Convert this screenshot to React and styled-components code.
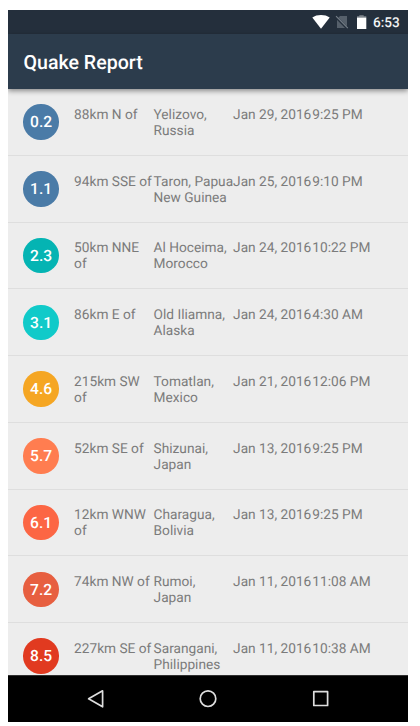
import React from "react";
import styled, { createGlobalStyle } from "styled-components";

const GlobalStyle = createGlobalStyle`
  html, body { margin: 0; background: #fff; overflow: hidden; }
  * { box-sizing: border-box; }
`;

const Screen = styled.main`
  display: flex;
  flex-direction: column;
  width: 400px;
  height: 712px;
  margin: 10px 0 0 8px;
  overflow: hidden;
  background: #ededed;
  font-family: Roboto, "Liberation Sans", sans-serif;
  text-rendering: geometricPrecision;
`;

const StatusBar = styled.div`
  display: flex;
  flex: 0 0 24px;
  align-items: center;
  justify-content: flex-end;
  padding-right: 8px;
  background: #242f3c;
  color: #f2f4f5;
`;

const StatusIcons = styled.svg`
  width: 56px;
  height: 24px;
  margin-right: 5px;
`;

const Clock = styled.span`
  width: 27px;
  padding-top: 2px;
  font-size: 13.6px;
  font-weight: 500;
  line-height: 16px;
  white-space: nowrap;
`;

const AppBar = styled.header`
  display: flex;
  flex: 0 0 55px;
  align-items: center;
  padding: 2px 0 0 15.5px;
  background: #2c3c4c;
  box-shadow: 0 2px 5px rgba(0, 0, 0, 0.42);
  z-index: 1;
`;

const Title = styled.h1`
  margin: 0;
  color: #fff;
  font-size: 19.6px;
  font-weight: 500;
  line-height: 24px;
`;

const QuakeList = styled.ul`
  flex: 1 1 0;
  min-height: 0;
  margin: 0;
  padding: 0;
  overflow: hidden;
  list-style: none;
`;

const QuakeRow = styled.li`
  display: grid;
  grid-template-columns: 35.5px 79.5px 79.5px 79.2px auto;
  justify-content: start;
  height: 66.75px;
  padding: 15.4px 0 0 15.4px;
  border-bottom: 1px solid #dedede;
`;

const Magnitude = styled.span`
  width: 35.5px;
  height: 35.5px;
  border-radius: 50%;
  background: ${({ $color }) => $color};
  color: #fff;
  font-size: 15.6px;
  font-weight: 500;
  line-height: 37.5px;
  text-align: center;
`;

const Cell = styled.span`
  padding-top: 2.6px;
  margin-left: 15.2px;
  margin-right: -15.2px;
  color: #7b7b7b;
  font-size: 13.7px;
  line-height: 16px;
  white-space: pre;
`;

const NavBar = styled.nav`
  display: flex;
  flex: 0 0 47px;
  align-items: center;
  justify-content: center;
  gap: 88.5px;
  border-top: 1px solid #303030;
  background: #000;
`;

const NavIcon = styled.svg`
  width: 24px;
  height: 24px;
  fill: none;
  stroke: #dedede;
  stroke-width: 1.7;
  stroke-linejoin: round;
`;

const quakes = [
  ["0.2", "#4a7ba7", "88km N of", "Yelizovo,\nRussia", "Jan 29, 2016", "9:25 PM"],
  ["1.1", "#4a7ba7", "94km SSE of", "Taron, Papua\nNew Guinea", "Jan 25, 2016", "9:10 PM"],
  ["2.3", "#04b4b3", "50km NNE\nof", "Al Hoceima,\nMorocco", "Jan 24, 2016", "10:22 PM"],
  ["3.1", "#10cac9", "86km E of", "Old Iliamna,\nAlaska", "Jan 24, 2016", "4:30 AM"],
  ["4.6", "#f5a623", "215km SW\nof", "Tomatlan,\nMexico", "Jan 21, 2016", "12:06 PM"],
  ["5.7", "#ff7d50", "52km SE of", "Shizunai,\nJapan", "Jan 13, 2016", "9:25 PM"],
  ["6.1", "#fc6644", "12km WNW\nof", "Charagua,\nBolivia", "Jan 13, 2016", "9:25 PM"],
  ["7.2", "#e75f40", "74km NW of", "Rumoi,\nJapan", "Jan 11, 2016", "11:08 AM"],
  ["8.5", "#e13a20", "227km SE of", "Sarangani,\nPhilippines", "Jan 11, 2016", "10:38 AM"],
];

export default function App() {
  return (
    <>
      <GlobalStyle />
      <Screen>
        <StatusBar>
          <StatusIcons viewBox="0 0 56 24" aria-hidden="true">
            <path d="M0.3 7.4C5 4.1 13 4.1 17.7 7.4L9 18.8Z" fill="#fff" />
            <path d="M28 6H35V18H25V9Z" fill="#56606b" />
            <path d="M23.6 6.7L35.4 18.6" stroke="#242f3c" strokeWidth="2.6" />
            <path d="M24 6.2L35.8 18.1" stroke="#77808a" strokeWidth="1.1" />
            <path d="M47.3 5.2H51.7V6.3H54.3V8H45V6.3H47.3Z" fill="#7e858c" />
            <path d="M45 7.7H54.3V19H45Z" fill="#fff" />
          </StatusIcons>
          <Clock>6:53</Clock>
        </StatusBar>
        <AppBar>
          <Title>Quake Report</Title>
        </AppBar>
        <QuakeList>
          {quakes.map(([magnitude, color, offset, place, date, time]) => (
            <QuakeRow key={magnitude}>
              <Magnitude $color={color}>{magnitude}</Magnitude>
              <Cell>{offset}</Cell>
              <Cell>{place}</Cell>
              <Cell>{date}</Cell>
              <Cell>{time}</Cell>
            </QuakeRow>
          ))}
        </QuakeList>
        <NavBar>
          <NavIcon viewBox="0 0 24 24"><path d="M4.6 11.8L18.6 3.8V19.8Z" /></NavIcon>
          <NavIcon viewBox="0 0 24 24"><circle cx="12" cy="11.7" r="7.8" /></NavIcon>
          <NavIcon viewBox="0 0 24 24"><rect x="4.8" y="4.7" width="13.8" height="13.8" /></NavIcon>
        </NavBar>
      </Screen>
    </>
  );
}
